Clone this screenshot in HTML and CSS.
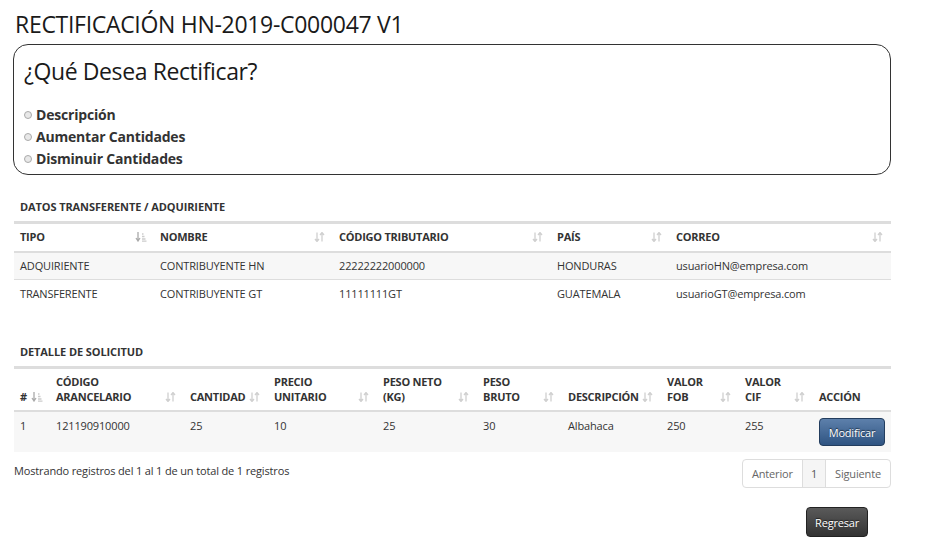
FILE: index.html
```html
<!DOCTYPE html>
<html lang="es">
<head>
<meta charset="utf-8">
<title>Rectificación</title>
<link rel="stylesheet" href="styles.css">
</head>
<body>
<div class="page">
  <h1 class="title">RECTIFICACIÓN HN-2019-C000047 V1</h1>

  <div class="choice-box">
    <h2 class="choice-title">¿Qué Desea Rectificar?</h2>
    <ul class="choice-list">
      <li><span class="radio"></span>Descripción</li>
      <li><span class="radio"></span>Aumentar Cantidades</li>
      <li><span class="radio"></span>Disminuir Cantidades</li>
    </ul>
  </div>

  <h3 class="section-title sec1">DATOS TRANSFERENTE / ADQUIRIENTE</h3>
  <table class="grid grid1">
    <colgroup>
      <col style="width:140px"><col style="width:179px"><col style="width:218px"><col style="width:119px"><col>
    </colgroup>
    <thead>
      <tr>
        <th><div class="th-in"><span>TIPO</span><svg class="sort on" viewBox="0 0 12 10"><path d="M3 0v8M1 6l2 3 2-3" /><path class="bars" d="M7 2h1.5M7 4.5h2.5M7 7h3.5M7 9.2h4.5"/></svg></div></th>
        <th><div class="th-in"><span>NOMBRE</span><svg class="sort" viewBox="0 0 12 10"><path d="M3 0.5v8.5M1 7l2 2.5 2-2.5M8 9.5v-8.5M6 3l2-2.5 2 2.5"/></svg></div></th>
        <th><div class="th-in"><span>CÓDIGO TRIBUTARIO</span><svg class="sort" viewBox="0 0 12 10"><path d="M3 0.5v8.5M1 7l2 2.5 2-2.5M8 9.5v-8.5M6 3l2-2.5 2 2.5"/></svg></div></th>
        <th><div class="th-in"><span>PAÍS</span><svg class="sort" viewBox="0 0 12 10"><path d="M3 0.5v8.5M1 7l2 2.5 2-2.5M8 9.5v-8.5M6 3l2-2.5 2 2.5"/></svg></div></th>
        <th><div class="th-in"><span>CORREO</span><svg class="sort" viewBox="0 0 12 10"><path d="M3 0.5v8.5M1 7l2 2.5 2-2.5M8 9.5v-8.5M6 3l2-2.5 2 2.5"/></svg></div></th>
      </tr>
    </thead>
    <tbody>
      <tr class="odd">
        <td>ADQUIRIENTE</td><td>CONTRIBUYENTE HN</td><td>22222222000000</td><td>HONDURAS</td><td>usuarioHN@empresa.com</td>
      </tr>
      <tr>
        <td>TRANSFERENTE</td><td>CONTRIBUYENTE GT</td><td>11111111GT</td><td>GUATEMALA</td><td>usuarioGT@empresa.com</td>
      </tr>
    </tbody>
  </table>

  <h3 class="section-title sec2">DETALLE DE SOLICITUD</h3>
  <table class="grid grid2">
    <colgroup>
      <col style="width:36px"><col style="width:134px"><col style="width:84px"><col style="width:109px"><col style="width:100px"><col style="width:85px"><col style="width:99px"><col style="width:78px"><col style="width:74px"><col>
    </colgroup>
    <thead>
      <tr>
        <th><div class="th-in"><span>#</span><svg class="sort on" viewBox="0 0 12 10"><path d="M3 0v8M1 6l2 3 2-3" /><path class="bars" d="M7 2h1.5M7 4.5h2.5M7 7h3.5M7 9.2h4.5"/></svg></div></th>
        <th><div class="th-in"><span>CÓDIGO<br>ARANCELARIO</span><svg class="sort" viewBox="0 0 12 10"><path d="M3 0.5v8.5M1 7l2 2.5 2-2.5M8 9.5v-8.5M6 3l2-2.5 2 2.5"/></svg></div></th>
        <th><div class="th-in"><span>CANTIDAD</span><svg class="sort" viewBox="0 0 12 10"><path d="M3 0.5v8.5M1 7l2 2.5 2-2.5M8 9.5v-8.5M6 3l2-2.5 2 2.5"/></svg></div></th>
        <th><div class="th-in"><span>PRECIO<br>UNITARIO</span><svg class="sort" viewBox="0 0 12 10"><path d="M3 0.5v8.5M1 7l2 2.5 2-2.5M8 9.5v-8.5M6 3l2-2.5 2 2.5"/></svg></div></th>
        <th><div class="th-in"><span>PESO NETO<br>(KG)</span><svg class="sort" viewBox="0 0 12 10"><path d="M3 0.5v8.5M1 7l2 2.5 2-2.5M8 9.5v-8.5M6 3l2-2.5 2 2.5"/></svg></div></th>
        <th><div class="th-in"><span>PESO<br>BRUTO</span><svg class="sort" viewBox="0 0 12 10"><path d="M3 0.5v8.5M1 7l2 2.5 2-2.5M8 9.5v-8.5M6 3l2-2.5 2 2.5"/></svg></div></th>
        <th><div class="th-in"><span>DESCRIPCIÓN</span><svg class="sort" viewBox="0 0 12 10"><path d="M3 0.5v8.5M1 7l2 2.5 2-2.5M8 9.5v-8.5M6 3l2-2.5 2 2.5"/></svg></div></th>
        <th><div class="th-in"><span>VALOR<br>FOB</span><svg class="sort" viewBox="0 0 12 10"><path d="M3 0.5v8.5M1 7l2 2.5 2-2.5M8 9.5v-8.5M6 3l2-2.5 2 2.5"/></svg></div></th>
        <th><div class="th-in"><span>VALOR<br>CIF</span><svg class="sort" viewBox="0 0 12 10"><path d="M3 0.5v8.5M1 7l2 2.5 2-2.5M8 9.5v-8.5M6 3l2-2.5 2 2.5"/></svg></div></th>
        <th><div class="th-in"><span>ACCIÓN</span></div></th>
      </tr>
    </thead>
    <tbody>
      <tr class="odd tall">
        <td>1</td><td>121190910000</td><td>25</td><td>10</td><td>25</td><td>30</td><td>Albahaca</td><td>250</td><td>255</td>
        <td class="act"><button class="btn btn-blue">Modificar</button></td>
      </tr>
    </tbody>
  </table>

  <div class="footer-row">
    <div class="info">Mostrando registros del 1 al 1 de un total de 1 registros</div>
    <div class="pager">
      <span class="pg">Anterior</span><span class="pg cur">1</span><span class="pg">Siguiente</span>
    </div>
  </div>

  <div class="actions">
    <button class="btn btn-dark">Regresar</button>
  </div>
</div>
</body>
</html>
```

FILE: styles.css
```css
* { box-sizing: border-box; }
html, body { margin: 0; padding: 0; background: #fff; }
body {
  font-family: "Open Sans", "Liberation Sans", sans-serif;
  color: #333;
}
.page {
  width: 926px;
  padding: 0 35px 0 14px;
}
.title {
  margin: 0;
  padding: 9px 0 0 1px;
  font-size: 23px;
  font-weight: 400;
  line-height: 30px;
  color: #1a1a1a;
  letter-spacing: -0.3px;
}
.choice-box {
  margin-top: 5px;
  margin-left: -1px;
  border: 1px solid #333;
  border-radius: 15px;
  height: 131px;
  padding: 10px 10px 0 10px;
}
.choice-title {
  margin: 0;
  font-size: 23px;
  font-weight: 400;
  line-height: 32px;
  color: #1a1a1a;
  letter-spacing: -0.4px;
}
.choice-list {
  list-style: none;
  margin: 17px 0 0 0;
  padding: 0;
}
.choice-list li {
  display: flex;
  align-items: center;
  font-size: 14px;
  font-weight: 700;
  line-height: 22px;
  color: #333;
  letter-spacing: -0.2px;
}
.radio {
  width: 8px;
  height: 8px;
  border-radius: 50%;
  border: 1px solid #aaa;
  background: #e8e8e8;
  margin-right: 4px;
}
.section-title {
  margin: 0;
  font-size: 11px;
  font-weight: 700;
  color: #333;
  padding-left: 6px;
  line-height: 15px;
  letter-spacing: -0.1px;
}
.sec1 { margin-top: 24px; }
.sec2 { margin-top: 36px; }
.grid {
  width: 877px;
  border-collapse: collapse;
  table-layout: fixed;
  font-size: 11px;
  letter-spacing: -0.15px;
}
.grid1 { margin-top: 7px; }
.grid2 { margin-top: 7px; }
.grid thead tr { border-top: 3px solid #ddd; border-bottom: 2px solid #ddd; }
.grid th {
  text-align: left;
  font-weight: 700;
  color: #333;
  padding: 0 6px 0 6px;
  vertical-align: bottom;
  letter-spacing: -0.25px;
}
.th-in {
  display: flex;
  align-items: flex-end;
  justify-content: space-between;
  line-height: 15px;
}
.grid1 th { height: 29px; padding-bottom: 7px; }
.grid2 th { height: 44px; padding-bottom: 6px; }
.sort {
  width: 12px;
  height: 10px;
  flex: none;
  margin-bottom: 2px;
  margin-right: 1px;
  fill: none;
  stroke: #d0d0d0;
  stroke-width: 1.3;
}
.sort.on { stroke: #aaa; }
.sort .bars { stroke: #ccc; }
.grid td {
  padding: 0 6px;
  height: 28px;
  color: #333;
  vertical-align: middle;
  white-space: nowrap;
}
.grid tbody tr { border-bottom: 1px solid #ddd; }
.grid tbody tr:last-child { border-bottom: none; }
.grid tbody tr.odd { background: #f7f7f7; }
.grid tr.tall td { height: 41px; vertical-align: top; padding-top: 6px; }
.btn {
  font-family: "Open Sans", "Liberation Sans", sans-serif;
  font-size: 11px;
  color: #fff;
  border-radius: 4px;
  cursor: pointer;
  letter-spacing: -0.2px;
  text-shadow: 0 -1px 1px rgba(0,0,0,0.6);
}
.btn-blue {
  width: 66px;
  height: 28px;
  padding: 0;
  border: 1px solid #233d5e;
  background: linear-gradient(#5d80ab, #2f5482);
}
.footer-row {
  display: flex;
  justify-content: space-between;
  align-items: flex-start;
  margin-top: 7px;
}
.info {
  font-size: 11px;
  line-height: 16px;
  padding-top: 4px;
  color: #333;
  letter-spacing: -0.15px;
}
.pager {
  display: flex;
  border: 1px solid #ddd;
  border-radius: 4px;
  height: 29px;
  font-size: 11px;
  color: #666;
  letter-spacing: -0.15px;
}
.pg {
  display: flex;
  align-items: center;
  padding: 0 9px;
  border-left: 1px solid #ddd;
}
.pg:first-child { border-left: none; }
.pg.cur { background: #f5f5f5; padding: 0 8px; color: #555; }
.actions {
  display: flex;
  justify-content: flex-end;
  padding-right: 23px;
  margin-top: 19px;
}
.btn-dark {
  width: 62px;
  height: 30px;
  padding: 0;
  border: 1px solid #222;
  background: linear-gradient(#5a5a5a, #333);
}
```
